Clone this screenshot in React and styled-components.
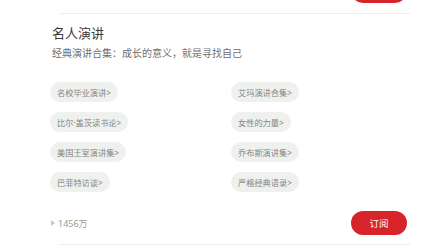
import styled, { createGlobalStyle } from 'styled-components';

const GlobalStyle = createGlobalStyle`
  html, body {
    margin: 0;
    padding: 0;
    background: #fff;
  }
  body {
    font-family: "Noto Sans CJK SC", "Noto Sans", sans-serif;
    overflow: hidden;
  }
`;

// the list is scrolled a bit, so the previous card's footer peeks in at the top
const List = styled.div`
  margin-top: -21px;
`;

const Footer = styled.div`
  display: flex;
  align-items: center;
  justify-content: space-between;
  height: 24px;
  padding: 0 14px 0 50px;
  margin-top: ${(p) => p.$top || 0}px;
`;

const Divider = styled.div`
  height: 1px;
  background: #ececec;
  margin: ${(p) => p.$gap}px 11px 0 60px;
`;

const Card = styled.section`
  padding: 9px 0 0;
`;

const Body = styled.div`
  padding: 0 14px 0 52px;
`;

const Title = styled.h2`
  margin: 0;
  font-size: 13px;
  font-weight: 400;
  line-height: 20px;
  color: #3a3a3a;
`;

const Subtitle = styled.p`
  margin: 3px 0 0;
  font-size: 10px;
  line-height: 14px;
  color: #707070;
`;

const Tags = styled.div`
  display: grid;
  grid-template-columns: 181px 1fr;
  row-gap: 10px;
  margin: 22px 0 0 -2px;
`;

const Tag = styled.div`
  justify-self: start;
  display: flex;
  align-items: center;
  height: 20px;
  padding: 0 7px;
  border-radius: 10px;
  background: #eef1ed;
  color: #858585;
  font-family: "Noto Sans", "Noto Sans CJK SC", sans-serif;
  font-size: 8.2px;
  white-space: nowrap;
`;

const Count = styled.div`
  display: flex;
  align-items: center;
  gap: 3px;
  color: #9a9a9a;
  font-size: 9px;
  font-family: "Noto Sans", "Noto Sans CJK SC", sans-serif;
`;

const Play = styled.span`
  width: 0;
  height: 0;
  border-top: 3.5px solid transparent;
  border-bottom: 3.5px solid transparent;
  border-left: 4px solid #c8c8c8;
  margin-left: 1px;
`;

const Subscribe = styled.button`
  width: 56px;
  height: 24px;
  border: 0;
  border-radius: 12px;
  background: #d7242a;
  color: #fff;
  font-family: "Noto Sans CJK SC", sans-serif;
  font-size: 9.5px;
  padding: 0;
`;

const tags = [
  '名校毕业演讲',
  '艾玛演讲合集',
  '比尔·盖茨读书论',
  '女性的力量',
  '美国王室演讲集',
  '乔布斯演讲集',
  '巴菲特访谈',
  '严格经典语录',
];

export default function App() {
  return (
    <>
      <GlobalStyle />
      <List>
        {/* previous card: only the bottom edge of its button is in view */}
        <Footer>
          <span />
          <Subscribe aria-label="订阅" />
        </Footer>
        <Divider $gap={10} />
        <Card>
          <Body>
            <Title>名人演讲</Title>
            <Subtitle>经典演讲合集：成长的意义，就是寻找自己</Subtitle>
            <Tags>
              {tags.map((t) => (
                <Tag key={t}>{t}&gt;</Tag>
              ))}
            </Tags>
          </Body>
          <Footer $top={19}>
            <Count>
              <Play />
              1456万
            </Count>
            <Subscribe>订阅</Subscribe>
          </Footer>
          <Divider $gap={9} />
        </Card>
      </List>
    </>
  );
}
